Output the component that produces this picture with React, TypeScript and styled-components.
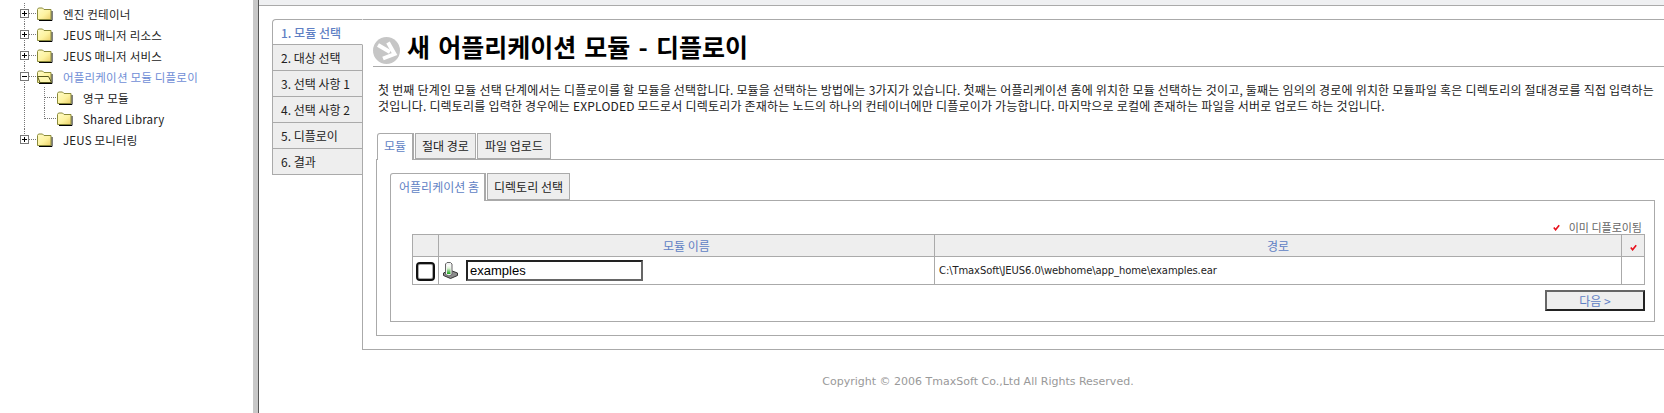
import React from 'react';
import styled, { createGlobalStyle } from 'styled-components';

const LINE = '#aaa';
const BLUE = '#5f7fc4';
const FONT = `"DejaVu Sans", "Noto Sans CJK KR", sans-serif`;
const HANGUL = `"Noto Sans CJK KR", "DejaVu Sans", sans-serif`;

const GlobalStyle = createGlobalStyle`
  html, body {
    margin: 0;
    padding: 0;
    width: 1664px;
    height: 413px;
    overflow: hidden;
    background: #fff;
  }
`;

const treeItems = [
  { label: '엔진 컨테이너', depth: 0, mark: 'plus' },
  { label: 'JEUS 매니저 리소스', depth: 0, mark: 'plus' },
  { label: 'JEUS 매니저 서비스', depth: 0, mark: 'plus' },
  { label: '어플리케이션 모듈 디플로이', depth: 0, mark: 'minus', open: true },
  { label: '영구 모듈', depth: 1, mark: 'tee' },
  { label: 'Shared Library', depth: 1, mark: 'end' },
  { label: 'JEUS 모니터링', depth: 0, mark: 'last' },
];

const steps = ['1. 모듈 선택', '2. 대상 선택', '3. 선택 사항 1', '4. 선택 사항 2', '5. 디플로이', '6. 결과'];

function Connector({ depth, mark }: { depth: number; mark: string }) {
  const dots = { stroke: '#777', strokeDasharray: '1 1', strokeWidth: 1 };
  const isLast = mark === 'last';
  return (
    <svg width={depth ? 57 : 37} height="21" style={{ flex: 'none' }}>
      <line x1="24.5" y1="0" x2="24.5" y2={isLast ? 10 : 21} {...dots} />
      {depth === 0 && <line x1="29" y1="10.5" x2="37" y2="10.5" {...dots} />}
      {depth === 0 && (
        <>
          <rect x="20.5" y="6.5" width="8" height="8" fill="#fff" stroke="#777" />
          <path d="M22 10.5h5" stroke="#000" />
          {mark !== 'minus' && <path d="M24.5 8v5" stroke="#000" />}
        </>
      )}
      {depth === 1 && (
        <>
          <line x1="44.5" y1="0" x2="44.5" y2={mark === 'end' ? 11 : 21} {...dots} />
          <line x1="45" y1="10.5" x2="57" y2="10.5" {...dots} />
        </>
      )}
    </svg>
  );
}

function Folder({ open }: { open?: boolean }) {
  return (
    <svg width="16" height="14" viewBox="0 0 16 14" style={{ flex: 'none' }}>
      <defs>
        <linearGradient id="folderFill" x1="0" y1="0" x2="1" y2="1">
          <stop offset="0" stopColor="#fffbc8" />
          <stop offset="0.55" stopColor="#fdf3a0" />
          <stop offset="1" stopColor="#eccf6a" />
        </linearGradient>
      </defs>
      <path d="M15 4v9.5H2" fill="none" stroke="#000" />
      <path d="M.5 2.500l1-1.500h4l1.500 1.500h7v10H.5z" fill="url(#folderFill)" stroke="#8a8a3a" />
      {open && <path d="M.5 6.500h11l3 6H3z" fill="#fdf6b0" stroke="#55551c" />}
    </svg>
  );
}

function Check() {
  return (
    <svg width="7" height="7" viewBox="0 0 7 7">
      <path d="M.8 3.600L2.600 5.800 6.200 1.200" fill="none" stroke="#e8101c" strokeWidth="1.6" />
    </svg>
  );
}

function TitleIcon() {
  return (
    <svg width="27" height="27" viewBox="0 0 27 27" style={{ flex: 'none' }}>
      <circle cx="13.5" cy="13.5" r="13.5" fill="#c6c6c6" />
      <path d="M5 8l12 7" stroke="#fff" strokeWidth="4" fill="none" />
      <path d="M15 5.500l6.500 11.500-11.500 4.500" stroke="#fff" strokeWidth="4" fill="none" />
    </svg>
  );
}

function ServerIcon() {
  return (
    <svg width="15" height="17" viewBox="0 0 15 17" style={{ flex: 'none' }}>
      <defs>
        <linearGradient id="serverFill" x1="0" y1="0" x2="0" y2="1">
          <stop offset="0" stopColor="#fff" />
          <stop offset="0.35" stopColor="#dff3d8" />
          <stop offset="1" stopColor="#17a017" />
        </linearGradient>
      </defs>
      <path d="M.5 11l6-3 8 3v2.500l-7 3-7-3z" fill="#8c8c8c" stroke="#333" />
      <path d="M2.500 2l1.500-1.500h3.500L9 2v10.500l-3 1.500-3.500-1.500z" fill="#f2f2f2" stroke="#666" />
      <rect x="4" y="3" width="3.500" height="9" fill="url(#serverFill)" />
    </svg>
  );
}

export default function App() {
  return (
    <>
      <GlobalStyle />
      <Frame>
        <Sidebar>
          {treeItems.map((item) => (
            <TreeRow key={item.label}>
              <Connector depth={item.depth} mark={item.mark} />
              <Folder open={item.open} />
              <TreeLabel $active={item.open}>{item.label}</TreeLabel>
            </TreeRow>
          ))}
        </Sidebar>
        <Splitter />
        <Main>
          <TopBar />
          <Wizard>
            <StepList>
              {steps.map((step, i) => (
                <Step key={step} $active={i === 0}>
                  {step}
                </Step>
              ))}
            </StepList>
            <WizardPanel>
              <TitleRow>
                <TitleIcon />
                <Title>새 어플리케이션 모듈 - 디플로이</Title>
              </TitleRow>
              <Description>
                첫 번째 단계인 모듈 선택 단계에서는 디플로이를 할 모듈을 선택합니다. 모듈을 선택하는 방법에는 3가지가 있습니다. 첫째는 어플리케이션 홈에 위치한 모듈 선택하는 것이고, 둘째는 임의의 경로에 위치한 모듈파일 혹은 디렉토리의 절대경로를 직접 입력하는
                <br />
                것입니다. 디렉토리를 입력한 경우에는 EXPLODED 모드로서 디렉토리가 존재하는 노드의 하나의 컨테이너에만 디플로이가 가능합니다. 마지막으로 로컬에 존재하는 파일을 서버로 업로드 하는 것입니다.
              </Description>
              <TabBar>
                <Tab $active $width={37}>모듈</Tab>
                <Tab $width={61}>절대 경로</Tab>
                <Tab $width={74}>파일 업로드</Tab>
              </TabBar>
              <TabPanel>
                <SubTabBar>
                  <SubTab $active $width={96}>어플리케이션 홈</SubTab>
                  <SubTab $width={83}>디렉토리 선택</SubTab>
                </SubTabBar>
                <SubPanel>
                  <Legend>
                    <Check />
                    <span>이미 디플로이됨</span>
                  </Legend>
                  <ModuleTable>
                    <colgroup>
                      <col width="26" />
                      <col width="496" />
                      <col width="687" />
                      <col width="23" />
                    </colgroup>
                    <thead>
                      <tr>
                        <HeadCell />
                        <HeadCell>모듈 이름</HeadCell>
                        <HeadCell>경로</HeadCell>
                        <HeadCell><Check /></HeadCell>
                      </tr>
                    </thead>
                    <tbody>
                      <tr>
                        <BodyCell $center><FakeCheckbox /></BodyCell>
                        <BodyCell>
                          <NameCell>
                            <ServerIcon />
                            <NameBox>examples</NameBox>
                          </NameCell>
                        </BodyCell>
                        <BodyCell><PathText>C:\TmaxSoft\JEUS6.0\webhome\app_home\examples.ear</PathText></BodyCell>
                        <BodyCell />
                      </tr>
                    </tbody>
                  </ModuleTable>
                  <ButtonRow>
                    <NextButton>다음 &gt;</NextButton>
                  </ButtonRow>
                </SubPanel>
              </TabPanel>
            </WizardPanel>
          </Wizard>
          <Copyright>Copyright © 2006 TmaxSoft Co.,Ltd All Rights Reserved.</Copyright>
        </Main>
      </Frame>
    </>
  );
}

const Frame = styled.div`
  display: flex;
  width: 1697px;
  height: 413px;
  font-family: ${FONT};
  font-size: 11px;
  color: #222;
`;

const Sidebar = styled.div`
  width: 253px;
  flex: none;
  padding-top: 3px;
  box-sizing: border-box;
`;

const TreeRow = styled.div`
  display: flex;
  align-items: center;
  height: 21px;
`;

const TreeLabel = styled.span<{ $active?: boolean }>`
  margin-left: 10px;
  font-family: ${HANGUL};
  font-size: 11.5px;
  letter-spacing: 0.2px;
  white-space: nowrap;
  color: ${(p) => (p.$active ? '#6f8ed6' : '#222')};
`;

const Splitter = styled.div`
  width: 5px;
  flex: none;
  background: #c8c8c8;
  border-right: 1px solid #555;
`;

const Main = styled.div`
  flex: 1;
  min-width: 0;
`;

const TopBar = styled.div`
  height: 5px;
  background: #eff0f2;
  border-bottom: 1px solid ${LINE};
`;

const Wizard = styled.div`
  display: flex;
  align-items: flex-start;
  margin: 13px 23px 0 13px;
`;

const StepList = styled.div`
  width: 91px;
  flex: none;
  margin-right: -1px;
  position: relative;
  z-index: 1;
`;

const Step = styled.div<{ $active?: boolean }>`
  height: 26px;
  box-sizing: border-box;
  padding-left: 8px;
  line-height: ${(p) => (p.$active ? '25px' : '26px')};
  font-family: ${HANGUL};
  font-size: 12px;
  white-space: nowrap;
  border: 1px solid ${LINE};
  border-top-width: ${(p) => (p.$active ? '1px' : '0')};
  background: ${(p) => (p.$active ? '#fff' : '#eee')};
  color: ${(p) => (p.$active ? BLUE : '#222')};
  border-right-color: ${(p) => (p.$active ? '#fff' : LINE)};
  border-top-left-radius: ${(p) => (p.$active ? '4px' : '0')};
  font-weight: ${(p) => (p.$active ? 500 : 400)};
`;

const WizardPanel = styled.div`
  flex: 1;
  min-width: 0;
  box-sizing: border-box;
  height: 331px;
  padding: 15px 3px 0 10px;
  border: 1px solid ${LINE};
`;

const TitleRow = styled.div`
  display: flex;
  align-items: center;
  gap: 7px;
  height: 31px;
  border-bottom: 1px solid ${LINE};
`;

const Title = styled.h1`
  margin: 0 0 9px;
  font-family: ${HANGUL};
  font-size: 25px;
  line-height: 28px;
  font-weight: 700;
  word-spacing: 2.5px;
  color: #000;
  white-space: nowrap;
`;

const Description = styled.p`
  margin: 15px 0 19px 5px;
  font-family: ${HANGUL};
  font-size: 12px;
  letter-spacing: 0.2px;
  line-height: 16px;
  white-space: nowrap;
  overflow: hidden;
`;

const TabBar = styled.div`
  display: flex;
  gap: 1px;
  margin-left: 4px;
  height: 26px;
  position: relative;
  z-index: 1;
`;

const Tab = styled.div<{ $active?: boolean; $width: number }>`
  width: ${(p) => p.$width}px;
  box-sizing: border-box;
  height: ${(p) => (p.$active ? '27px' : '26px')};
  line-height: 24px;
  text-align: center;
  font-family: ${HANGUL};
  font-size: 12px;
  white-space: nowrap;
  border: 1px solid ${LINE};
  border-bottom-width: ${(p) => (p.$active ? '0' : '1px')};
  border-right-width: ${(p) => (p.$active ? '2px' : '1px')};
  border-top-left-radius: ${(p) => (p.$active ? '3px' : '0')};
  background: ${(p) => (p.$active ? '#fff' : '#eee')};
  color: ${(p) => (p.$active ? BLUE : '#222')};
`;

const TabPanel = styled.div`
  margin-left: 3px;
  box-sizing: border-box;
  height: 177px;
  padding: 13px 14px 0 13px;
  border: 1px solid ${LINE};
`;

const SubTabBar = styled(TabBar)`
  margin-left: 0;
  height: 27px;
`;

const SubTab = styled(Tab)`
  height: ${(p) => (p.$active ? '28px' : '27px')};
  line-height: 25px;
  padding-left: ${(p) => (p.$active ? '3px' : '0')};
`;

const SubPanel = styled.div`
  box-sizing: border-box;
  height: 122px;
  padding: 19px 10px 0 21px;
  border: 1px solid ${LINE};
`;

const Legend = styled.div`
  display: flex;
  justify-content: flex-end;
  align-items: center;
  gap: 9px;
  height: 14px;
  padding-right: 2px;
  font-family: ${HANGUL};
  font-size: 11px;
  color: #666;
`;

const ModuleTable = styled.table`
  width: 1232px;
  table-layout: fixed;
  border-collapse: collapse;
`;

const HeadCell = styled.th`
  height: 21px;
  padding: 0;
  background: #eee;
  border: 1px solid ${LINE};
  font-family: ${HANGUL};
  font-size: 12px;
  font-weight: 400;
  color: ${BLUE};
  text-align: center;
`;

const BodyCell = styled.td<{ $center?: boolean }>`
  height: 27px;
  padding: 0;
  border: 1px solid ${LINE};
  text-align: ${(p) => (p.$center ? 'center' : 'left')};
`;

const FakeCheckbox = styled.div`
  width: 19px;
  height: 19px;
  margin: 1px auto 0;
  box-sizing: border-box;
  border: 2px solid #111;
  border-radius: 4px;
  background: #fff;
  box-shadow: inset 0 0 0 1px #aaa;
`;

const NameCell = styled.div`
  display: flex;
  align-items: center;
  gap: 8px;
  padding-left: 4px;
`;

const NameBox = styled.div`
  width: 177px;
  height: 21px;
  box-sizing: border-box;
  padding-left: 2px;
  border: 2px solid;
  border-color: #222 #666 #666 #222;
  font-family: "Liberation Sans", sans-serif;
  font-size: 13px;
  line-height: 17px;
  color: #000;
`;

const PathText = styled.span`
  margin-left: 4px;
  font-size: 10px;
  letter-spacing: -0.1px;
  white-space: nowrap;
`;

const ButtonRow = styled.div`
  display: flex;
  justify-content: flex-end;
  width: 1233px;
  margin-top: 5px;
`;

const NextButton = styled.div`
  width: 100px;
  height: 21px;
  box-sizing: border-box;
  border: 2px solid;
  border-color: #666 #222 #222 #666;
  background: #eee;
  color: ${BLUE};
  text-align: center;
  font-family: ${HANGUL};
  font-size: 12px;
  line-height: 17px;
`;

const Copyright = styled.div`
  margin-top: 24px;
  text-align: center;
  color: #999;
  font-size: 11px;
  line-height: 16px;
`;
